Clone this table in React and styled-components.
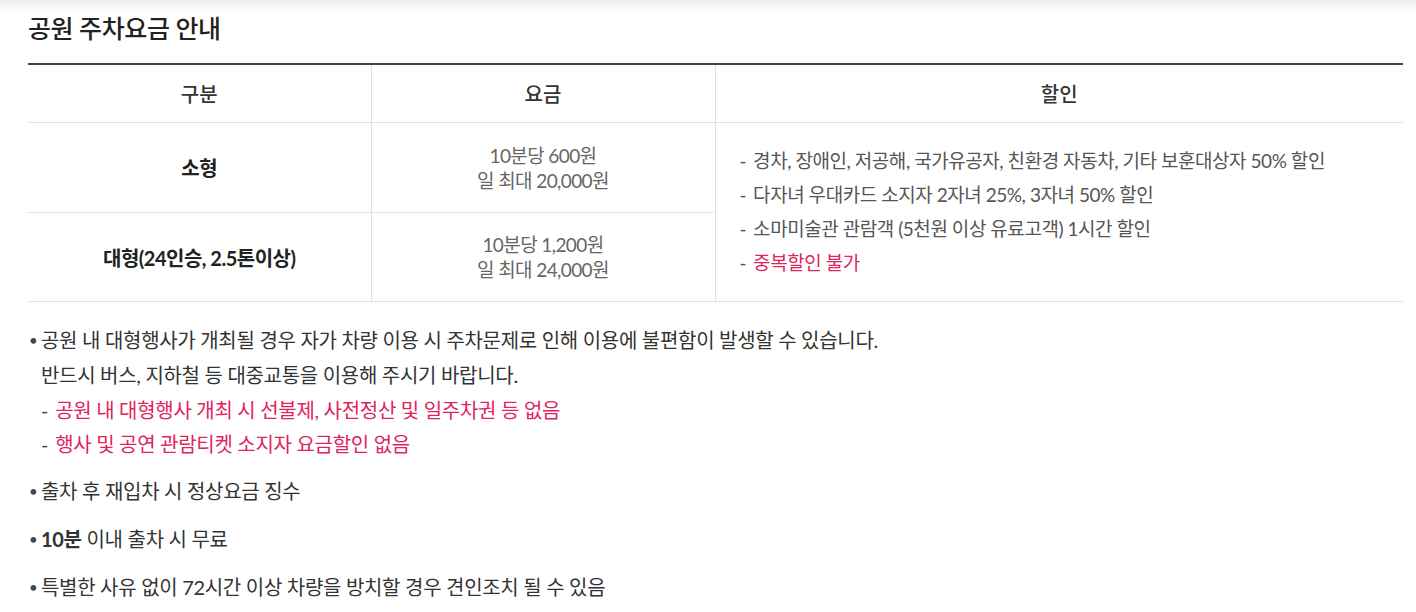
import React from "react";
import styled, { createGlobalStyle } from "styled-components";

const GlobalStyle = createGlobalStyle`
  body {
    margin: 0;
    background: #fff;
    font-family: "Lato", "Noto Sans CJK KR", sans-serif;
    color: #333;
  }
`;

const TopShade = styled.div`
  height: 12px;
  background: linear-gradient(#ebebeb, #fff);
`;

const Page = styled.div`
  padding: 0 13px 0 28px;
`;

const Title = styled.h2`
  margin: 0;
  font-size: 25px;
  font-weight: 500;
  color: #222;
  line-height: 32px;
  letter-spacing: -0.4px;
`;

const Table = styled.table`
  width: 100%;
  margin-top: 19px;
  border-collapse: collapse;
  border-top: 2px solid #444;
  table-layout: fixed;
`;

const Th = styled.th`
  height: 57px;
  padding: 0;
  font-size: 20px;
  font-weight: 500;
  color: #333;
  border-bottom: 1px solid #e2e2e2;
  border-left: 1px solid #e2e2e2;
  &:first-child { border-left: 0; }
`;

const Td = styled.td`
  height: ${(p) => p.$h || 89}px;
  padding: 0;
  text-align: center;
  vertical-align: middle;
  border-bottom: 1px solid #e2e2e2;
  border-left: 1px solid #e2e2e2;
  &:first-child { border-left: 0; }
`;

const TypeName = styled.span`
  font-size: 20px;
  font-weight: 700;
  color: #222;
  letter-spacing: -0.5px;
`;

const Fee = styled.div`
  font-size: 19px;
  line-height: 25px;
  color: #666;
  letter-spacing: -0.6px;
`;

const DiscountCell = styled(Td)`
  text-align: left;
  padding: 0 0 0 24px;
`;

const DiscountList = styled.ul`
  list-style: none;
  margin: 0;
  padding: 0;
`;

const DiscountItem = styled.li`
  font-size: 19px;
  line-height: 34px;
  letter-spacing: -0.45px;
  color: ${(p) => (p.$red ? "#e0245e" : "#555")};
  &::before {
    content: "-";
    color: #555;
    margin-right: 7px;
  }
`;

const Notes = styled.ul`
  list-style: none;
  margin: 21px 0 0;
  padding: 0;
`;

const Note = styled.li`
  position: relative;
  padding-left: 13px;
  font-size: 20px;
  line-height: 35px;
  color: #333;
  letter-spacing: -0.3px;
  & + & { margin-top: 13px; }
  &::before {
    content: "•";
    position: absolute;
    left: 1px;
    top: 0;
    font-size: 15px;
    color: #444;
  }
`;

const SubList = styled.ul`
  list-style: none;
  margin: 0;
  padding: 0;
`;

const SubItem = styled.li`
  color: #e0245e;
  font-size: 20px;
  line-height: 34px;
  &::before {
    content: "-";
    color: #444;
    margin-right: 7px;
  }
`;

const rows = [
  { name: "소형", fee: ["10분당 600원", "일 최대 20,000원"], h: 89 },
  { name: "대형(24인승, 2.5톤이상)", fee: ["10분당 1,200원", "일 최대 24,000원"], h: 88 },
];

const discounts = [
  "경차, 장애인, 저공해, 국가유공자, 친환경 자동차, 기타 보훈대상자 50% 할인",
  "다자녀 우대카드 소지자 2자녀 25%, 3자녀 50% 할인",
  "소마미술관 관람객 (5천원 이상 유료고객) 1시간 할인",
];

export default function App() {
  return (
    <>
      <GlobalStyle />
      <TopShade />
      <Page>
        <Title>공원 주차요금 안내</Title>
        <Table>
          <colgroup>
            <col style={{ width: "343px" }} />
            <col style={{ width: "344px" }} />
            <col />
          </colgroup>
          <thead>
            <tr>
              <Th>구분</Th>
              <Th>요금</Th>
              <Th>할인</Th>
            </tr>
          </thead>
          <tbody>
            {rows.map((r, i) => (
              <tr key={r.name}>
                <Td $h={r.h}>
                  <TypeName>{r.name}</TypeName>
                </Td>
                <Td $h={r.h}>
                  {r.fee.map((f) => (
                    <Fee key={f}>{f}</Fee>
                  ))}
                </Td>
                {i === 0 && (
                  <DiscountCell rowSpan={2}>
                    <DiscountList>
                      {discounts.map((d) => (
                        <DiscountItem key={d}>{d}</DiscountItem>
                      ))}
                      <DiscountItem $red>중복할인 불가</DiscountItem>
                    </DiscountList>
                  </DiscountCell>
                )}
              </tr>
            ))}
          </tbody>
        </Table>
        <Notes>
          <Note>
            공원 내 대형행사가 개최될 경우 자가 차량 이용 시 주차문제로 인해 이용에 불편함이 발생할 수 있습니다.
            <br />
            반드시 버스, 지하철 등 대중교통을 이용해 주시기 바랍니다.
            <SubList>
              <SubItem>공원 내 대형행사 개최 시 선불제, 사전정산 및 일주차권 등 없음</SubItem>
              <SubItem>행사 및 공연 관람티켓 소지자 요금할인 없음</SubItem>
            </SubList>
          </Note>
          <Note>출차 후 재입차 시 정상요금 징수</Note>
          <Note>
            <b>10분</b> 이내 출차 시 무료
          </Note>
          <Note>특별한 사유 없이 72시간 이상 차량을 방치할 경우 견인조치 될 수 있음</Note>
        </Notes>
      </Page>
    </>
  );
}
